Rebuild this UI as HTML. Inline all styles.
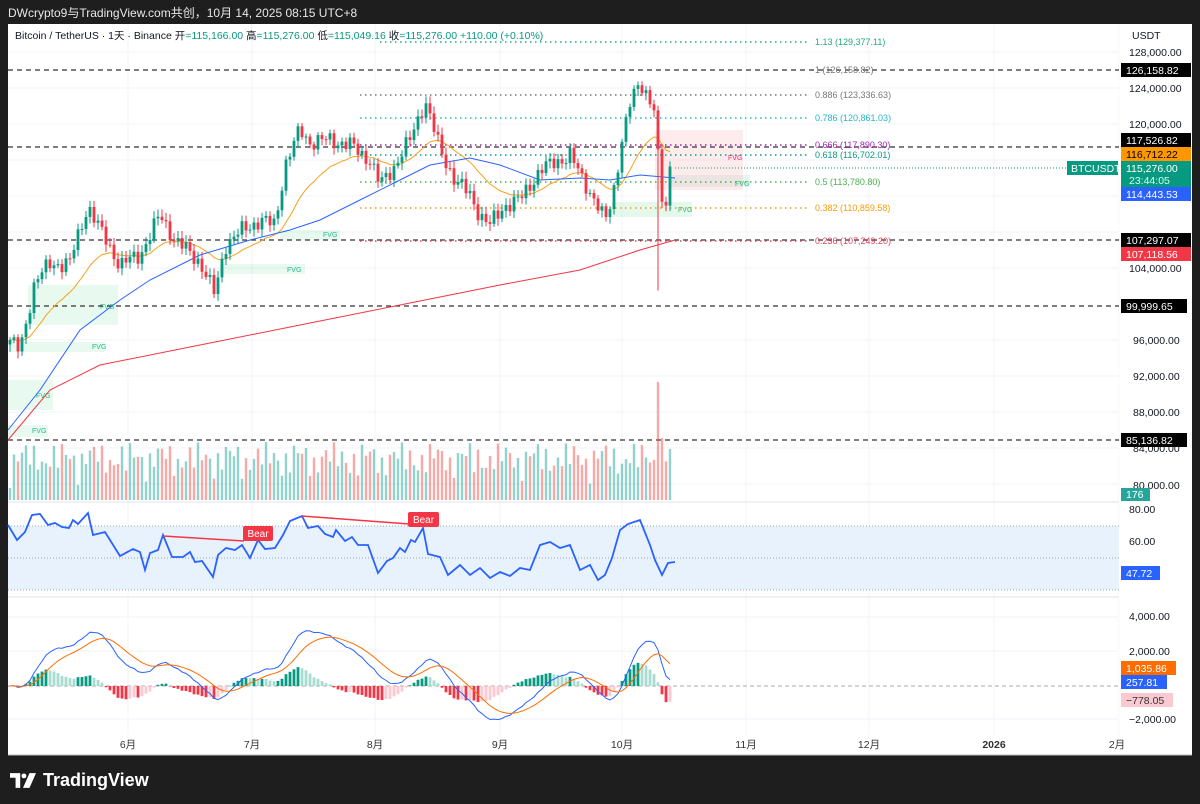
<!DOCTYPE html>
<html><head><meta charset="utf-8"><style>
body{margin:0;background:#1e1e1e;width:1200px;height:804px;overflow:hidden;font-family:"Liberation Sans","Noto Sans CJK SC",sans-serif}
#top{position:absolute;left:8px;top:4px;color:#e8e8e8;font-size:12px}
#chart{position:absolute;left:8px;top:24px;width:1184px;height:731px;background:#fff}
svg{position:absolute;left:0;top:0}
#logo{position:absolute;left:10px;top:770px;color:#fff;font-size:18px;font-weight:bold;display:flex;align-items:center;gap:7px}
</style></head><body>
<div id="top">DWcrypto9与TradingView.com共创，10月 14, 2025 08:15 UTC+8</div>
<div id="chart"></div>
<svg width="1200" height="804" id="s" font-family="Liberation Sans, Noto Sans CJK SC, sans-serif">
<g id="grid" stroke="#f0f3fa" stroke-width="1">
<line x1="8" x2="1118" y1="52" y2="52"/><line x1="8" x2="1118" y1="88" y2="88"/><line x1="8" x2="1118" y1="124" y2="124"/><line x1="8" x2="1118" y1="160" y2="160"/><line x1="8" x2="1118" y1="196" y2="196"/><line x1="8" x2="1118" y1="232" y2="232"/><line x1="8" x2="1118" y1="268" y2="268"/><line x1="8" x2="1118" y1="340" y2="340"/><line x1="8" x2="1118" y1="376" y2="376"/><line x1="8" x2="1118" y1="412" y2="412"/><line x1="8" x2="1118" y1="448" y2="448"/><line x1="8" x2="1118" y1="484" y2="484"/>
<line x1="8" x2="1118" y1="617" y2="617"/><line x1="8" x2="1118" y1="651" y2="651"/><line x1="8" x2="1118" y1="719" y2="719"/>
<line x1="128" x2="128" y1="24" y2="735"/><line x1="252" x2="252" y1="24" y2="735"/><line x1="375" x2="375" y1="24" y2="735"/><line x1="500" x2="500" y1="24" y2="735"/><line x1="622" x2="622" y1="24" y2="735"/><line x1="746" x2="746" y1="24" y2="735"/><line x1="869" x2="869" y1="24" y2="735"/><line x1="994" x2="994" y1="24" y2="735"/>
</g>
<line x1="8" x2="1192" y1="502" y2="502" stroke="#e0e3eb"/>
<line x1="8" x2="1192" y1="597" y2="597" stroke="#e0e3eb"/>
<line x1="1119" x2="1119" y1="24" y2="735" stroke="#f0f3fa"/>
<rect x="8" y="526" width="1111" height="64" fill="#e3f0fc" opacity="0.85"/>
<g stroke="#9aa" stroke-dasharray="1 2" stroke-width="1"><line x1="8" x2="1119" y1="526" y2="526"/><line x1="8" x2="1119" y1="558" y2="558"/><line x1="8" x2="1119" y1="590" y2="590"/></g>
<line x1="8" x2="1119" y1="686" y2="686" stroke="#aaa" stroke-dasharray="4 3"/>
<g font-size="7">
<rect x="655" y="130" width="88" height="60" fill="#f23645" opacity="0.1"/><text x="728" y="160" fill="#f27">FVG</text>
<rect x="670" y="175" width="80" height="12" fill="#089981" opacity="0.08"/><text x="735" y="186" fill="#2b8">FVG</text>
<rect x="612" y="202" width="80" height="15" fill="#22c55e" opacity="0.12"/><text x="678" y="212" fill="#2b8">FVG</text>
<rect x="280" y="230" width="60" height="10" fill="#22c55e" opacity="0.1"/><text x="323" y="237" fill="#2b8">FVG</text>
<rect x="220" y="264" width="85" height="10" fill="#22c55e" opacity="0.1"/><text x="287" y="272" fill="#2b8">FVG</text>
<rect x="28" y="285" width="90" height="40" fill="#22c55e" opacity="0.1"/><text x="100" y="309" fill="#2b8">FVG</text>
<rect x="10" y="342" width="95" height="10" fill="#22c55e" opacity="0.1"/><text x="92" y="349" fill="#2b8">FVG</text>
<rect x="8" y="380" width="45" height="30" fill="#22c55e" opacity="0.1"/><text x="36" y="398" fill="#2b8">FVG</text>
<rect x="8" y="425" width="40" height="12" fill="#22c55e" opacity="0.1"/><text x="32" y="433" fill="#2b8">FVG</text>
</g>
<g stroke="#333" stroke-dasharray="5 4" stroke-width="1.2">
<line x1="8" x2="1119" y1="70" y2="70"/><line x1="8" x2="1119" y1="147" y2="147"/><line x1="8" x2="1119" y1="240" y2="240"/><line x1="8" x2="1119" y1="306" y2="306"/><line x1="8" x2="1119" y1="440" y2="440"/>
</g>
<g stroke-dasharray="1.5 3.5" stroke-width="1.5">
<line x1="380" x2="810" y1="42" y2="42" stroke="#22ab7a"/>
<line x1="360" x2="810" y1="95" y2="95" stroke="#777"/>
<line x1="360" x2="810" y1="118" y2="118" stroke="#22b8c8"/>
<line x1="360" x2="810" y1="145" y2="145" stroke="#9c27b0"/>
<line x1="360" x2="810" y1="155" y2="155" stroke="#089981"/>
<line x1="360" x2="810" y1="182" y2="182" stroke="#4caf50"/>
<line x1="360" x2="810" y1="208" y2="208" stroke="#ff9800"/>
<line x1="360" x2="810" y1="241" y2="241" stroke="#e0405a"/>
</g>
<line x1="675" x2="1066" y1="168" y2="168" stroke="#089981" stroke-dasharray="1 2"/>
<g font-size="9">
<text x="815" y="45" fill="#22ab7a">1.13 (129,377.11)</text>
<text x="815" y="73" fill="#777">1 (126,158.82)</text>
<text x="815" y="98" fill="#777">0.886 (123,336.63)</text>
<text x="815" y="121" fill="#22b8c8">0.786 (120,861.03)</text>
<text x="815" y="148" fill="#9c27b0">0.666 (117,890.30)</text>
<text x="815" y="158" fill="#089981">0.618 (116,702.01)</text>
<text x="815" y="185" fill="#4caf50">0.5 (113,780.80)</text>
<text x="815" y="211" fill="#ff9800">0.382 (110,859.58)</text>
<text x="815" y="244" fill="#e0405a">0.236 (107,249.20)</text>
</g>
<g id="vol"></g><g id="ma"></g><g id="cd"></g><g id="ind"></g>
<polyline fill="none" stroke="#2962ff" stroke-width="1.8" points="8,525 17,540 25,532 32,515 40,514 48,525 55,523 62,527 69,528 73,520 78,524 88,513 93,535 105,532 120,556 133,549 140,552 145,570 150,553 158,550 163,535 172,557 183,557 190,552 195,562 202,561 213,577 218,555 226,548 235,550 242,545 250,558 258,540 265,549 275,548 283,535 290,521 302,516 308,528 318,526 325,534 333,537 336,530 345,541 352,537 358,545 368,545 378,573 387,561 393,558 400,548 405,552 411,540 415,542 423,528 428,554 440,557 448,575 460,565 470,575 480,568 490,578 500,572 510,576 520,568 530,570 540,545 550,542 560,548 570,545 580,570 590,565 598,580 605,575 612,558 620,530 628,524 640,520 650,545 655,560 662,575 668,563 675,562"/>
<line x1="163" y1="536" x2="244" y2="541" stroke="#f23645" stroke-width="1.5"/>
<line x1="302" y1="516" x2="409" y2="524" stroke="#f23645" stroke-width="1.5"/>
<rect x="243" y="526" width="30" height="15" rx="2" fill="#f23645"/><text x="258" y="537" font-size="10" fill="#fff" text-anchor="middle">Bear</text>
<rect x="408" y="512" width="31" height="15" rx="2" fill="#f23645"/><text x="423.5" y="523" font-size="10" fill="#fff" text-anchor="middle">Bear</text>
<text x="15" y="39" font-size="10.5" fill="#131722">Bitcoin / TetherUS · 1天 · Binance  开<tspan fill="#089981">=115,166.00</tspan>  高<tspan fill="#089981">=115,276.00</tspan>  低<tspan fill="#089981">=115,049.16</tspan>  收<tspan fill="#089981">=115,276.00  +110.00 (+0.10%)</tspan></text>
<rect x="1119" y="24" width="73" height="731" fill="#fff" opacity="0.9"/>
<g font-size="10.5" fill="#131722">
<text x="1132" y="39">USDT</text>
<text x="1129" y="56">128,000.00</text><text x="1129" y="92">124,000.00</text><text x="1129" y="128">120,000.00</text><text x="1129" y="272">104,000.00</text><text x="1133" y="344">96,000.00</text><text x="1133" y="380">92,000.00</text><text x="1133" y="416">88,000.00</text><text x="1133" y="452">84,000.00</text><text x="1133" y="489">80,000.00</text>
<text x="1129" y="513">80.00</text><text x="1129" y="545">60.00</text><text x="1129" y="577">40.00</text>
<text x="1129" y="620">4,000.00</text><text x="1129" y="655">2,000.00</text><text x="1129" y="723">−2,000.00</text>
</g>
<g font-size="10.5" fill="#fff">
<rect x="1121" y="63" width="70" height="14" fill="#000"/><text x="1126" y="74">126,158.82</text>
<rect x="1121" y="133" width="70" height="14" fill="#000"/><text x="1126" y="144">117,526.82</text>
<rect x="1121" y="147" width="70" height="14" fill="#ff9800"/><text x="1126" y="158" fill="#000">116,712.22</text>
<rect x="1121" y="161" width="70" height="26" fill="#089981"/><text x="1126" y="172">115,276.00</text><text x="1129" y="184" fill="#cfe">23:44:05</text>
<rect x="1121" y="187" width="70" height="14" fill="#2962ff"/><text x="1126" y="198">114,443.53</text>
<rect x="1067" y="161" width="51" height="14" fill="#089981"/><text x="1071" y="172">BTCUSDT</text>
<rect x="1121" y="233" width="70" height="14" fill="#000"/><text x="1126" y="244">107,297.07</text>
<rect x="1121" y="247" width="70" height="14" fill="#f23645"/><text x="1126" y="258">107,118.56</text>
<rect x="1121" y="299" width="66" height="14" fill="#000"/><text x="1126" y="310">99,999.65</text>
<rect x="1121" y="433" width="66" height="14" fill="#000"/><text x="1126" y="444">85,136.82</text>
<rect x="1121" y="488" width="29" height="13" fill="#26a69a"/><text x="1126" y="498">176</text>
<rect x="1121" y="566" width="39" height="14" fill="#2962ff"/><text x="1126" y="577">47.72</text>
<rect x="1121" y="661" width="55" height="14" fill="#ff6d00"/><text x="1126" y="672">1,035.86</text>
<rect x="1121" y="675" width="46" height="14" fill="#2962ff"/><text x="1126" y="686">257.81</text>
<rect x="1121" y="693" width="52" height="14" fill="#fcc8d2"/><text x="1126" y="704" fill="#333">−778.05</text>
</g>
<g font-size="10.5" fill="#333" text-anchor="middle">
<text x="128" y="748">6月</text><text x="252" y="748">7月</text><text x="375" y="748">8月</text><text x="500" y="748">9月</text><text x="622" y="748">10月</text><text x="746" y="748">11月</text><text x="869" y="748">12月</text><text x="994" y="748" font-weight="bold">2026</text><text x="1117" y="748">2月</text>
</g>
<rect x="1192" y="0" width="8" height="804" fill="#1e1e1e"/>
<line x1="8" x2="1192" y1="755" y2="755" stroke="#bbb"/>
</svg>
<div id="logo"><svg width="26" height="15" style="position:static" viewBox="0 0 28 16"><path d="M0 0h11v16H6V5H0z" fill="#fff"/><circle cx="15" cy="3" r="2.6" fill="#fff"/><path d="M21 0h7l-7 16h-7z" fill="#fff"/></svg>TradingView</div>
<script>
var N="http://www.w3.org/2000/svg";
function P(y){return 128000-(y-52)/0.009}
function Y(p){return 52+(128000-p)*0.009}
var kp=[[10,340],[20,352],[35,280],[50,265],[70,262],[88,205],[100,230],[120,265],[140,255],[160,215],[175,240],[200,262],[215,295],[225,245],[240,232],[260,220],[275,225],[285,165],[300,130],[310,142],[330,140],[350,145],[370,160],[380,185],[395,165],[410,140],[425,100],[440,150],[455,180],[470,195],[480,215],[490,225],[505,205],[520,200],[540,170],[560,160],[570,155],[580,175],[595,200],[605,222],[612,200],[622,140],[630,105],[640,82],[648,95],[655,112],[660,190],[665,215],[670,175],[675,167]];
function iy(x){for(var k=1;k<kp.length;k++){if(x<=kp[k][0]){var a=kp[k-1],b=kp[k];return a[1]+(b[1]-a[1])*(x-a[0])/(b[0]-a[0]);}}return 167}
var n=166,C=[],X=[];
for(var i=0;i<n;i++){var x=10+i*4.0;X.push(x);var c=P(iy(x))+650*Math.sin(i*2.3)+450*Math.sin(i*0.9);if(i==n-1)c=115276;C.push(c)}
var crash=Math.round((658-10)/4);
function el(t,a,g){var e=document.createElementNS(N,t);for(var k in a)e.setAttribute(k,a[k]);document.getElementById(g).appendChild(e);return e}
for(i=0;i<n;i++){var o=i?C[i-1]:C[0]-500,c=C[i],up=c>=o;var col=up?"#089981":"#f23645";
var h=Math.max(o,c)+300+500*Math.abs(Math.sin(i*3.1)),l=Math.min(o,c)-300-500*Math.abs(Math.cos(i*1.7));
if(i==crash)l=101500;
el("line",{x1:X[i],x2:X[i],y1:Y(h),y2:Y(l),stroke:col,"stroke-width":1},"cd");
var t=Y(Math.max(o,c)),b=Y(Math.min(o,c));el("rect",{x:X[i]-1.4,y:t,width:2.8,height:Math.max(1,b-t),fill:col},"cd");
var vh=12+28*Math.abs(Math.sin(i*1.3))+18*Math.abs(Math.sin(i*0.37));if(i==crash)vh=118;if(i==crash+1)vh=62;
el("rect",{x:X[i]-1.2,y:500-vh,width:2.4,height:vh,fill:up?"rgba(38,166,154,0.5)":"rgba(239,83,80,0.5)"},"vol");}
function ema(a,p){var k=2/(p+1),r=[a[0]];for(var i=1;i<a.length;i++)r.push(a[i]*k+r[i-1]*(1-k));return r}
function pl(pts,col,w,g){el("polyline",{points:pts.join(" "),fill:"none",stroke:col,"stroke-width":w},g)}
var e20=ema(C,20),pts=[];for(i=0;i<n;i++)pts.push(X[i]+","+Y(e20[i]));pl(pts,"#f7a21b",1,"ma");
pl(["8,430","40,390","80,330","120,300","150,280","200,255","250,240","290,230","320,220","360,200","400,180","430,165","470,158","500,165","540,180","580,178","610,180","640,175","675,178"],"#2962ff",1,"ma");
pl(["8,440","50,390","100,365","200,345","300,325","400,305","500,285","580,270","640,250","675,240"],"#f23645",1,"ma");
var a12=ema(C,12),a26=ema(C,26),m=[];for(i=0;i<n;i++)m.push(a12[i]-a26[i]);var s=ema(m,9),mp=[],sp=[];
for(i=0;i<n;i++){mp.push(X[i]+","+(686-m[i]*0.017));sp.push(X[i]+","+(686-s[i]*0.017));var hh=m[i]-s[i],prev=i?m[i-1]-s[i-1]:0;
var col=hh>=0?(hh>=prev?"#089981":"#a8dcd1"):(hh<prev?"#f23645":"#fcc8d2");var yy=686-hh*0.017;
el("rect",{x:X[i]-1.4,y:Math.min(686,yy),width:2.8,height:Math.max(0.5,Math.abs(hh*0.017)),fill:col},"ind");}
pl(mp,"#2962ff",1,"ind");pl(sp,"#ff6d00",1,"ind");
</script>
</body></html>
